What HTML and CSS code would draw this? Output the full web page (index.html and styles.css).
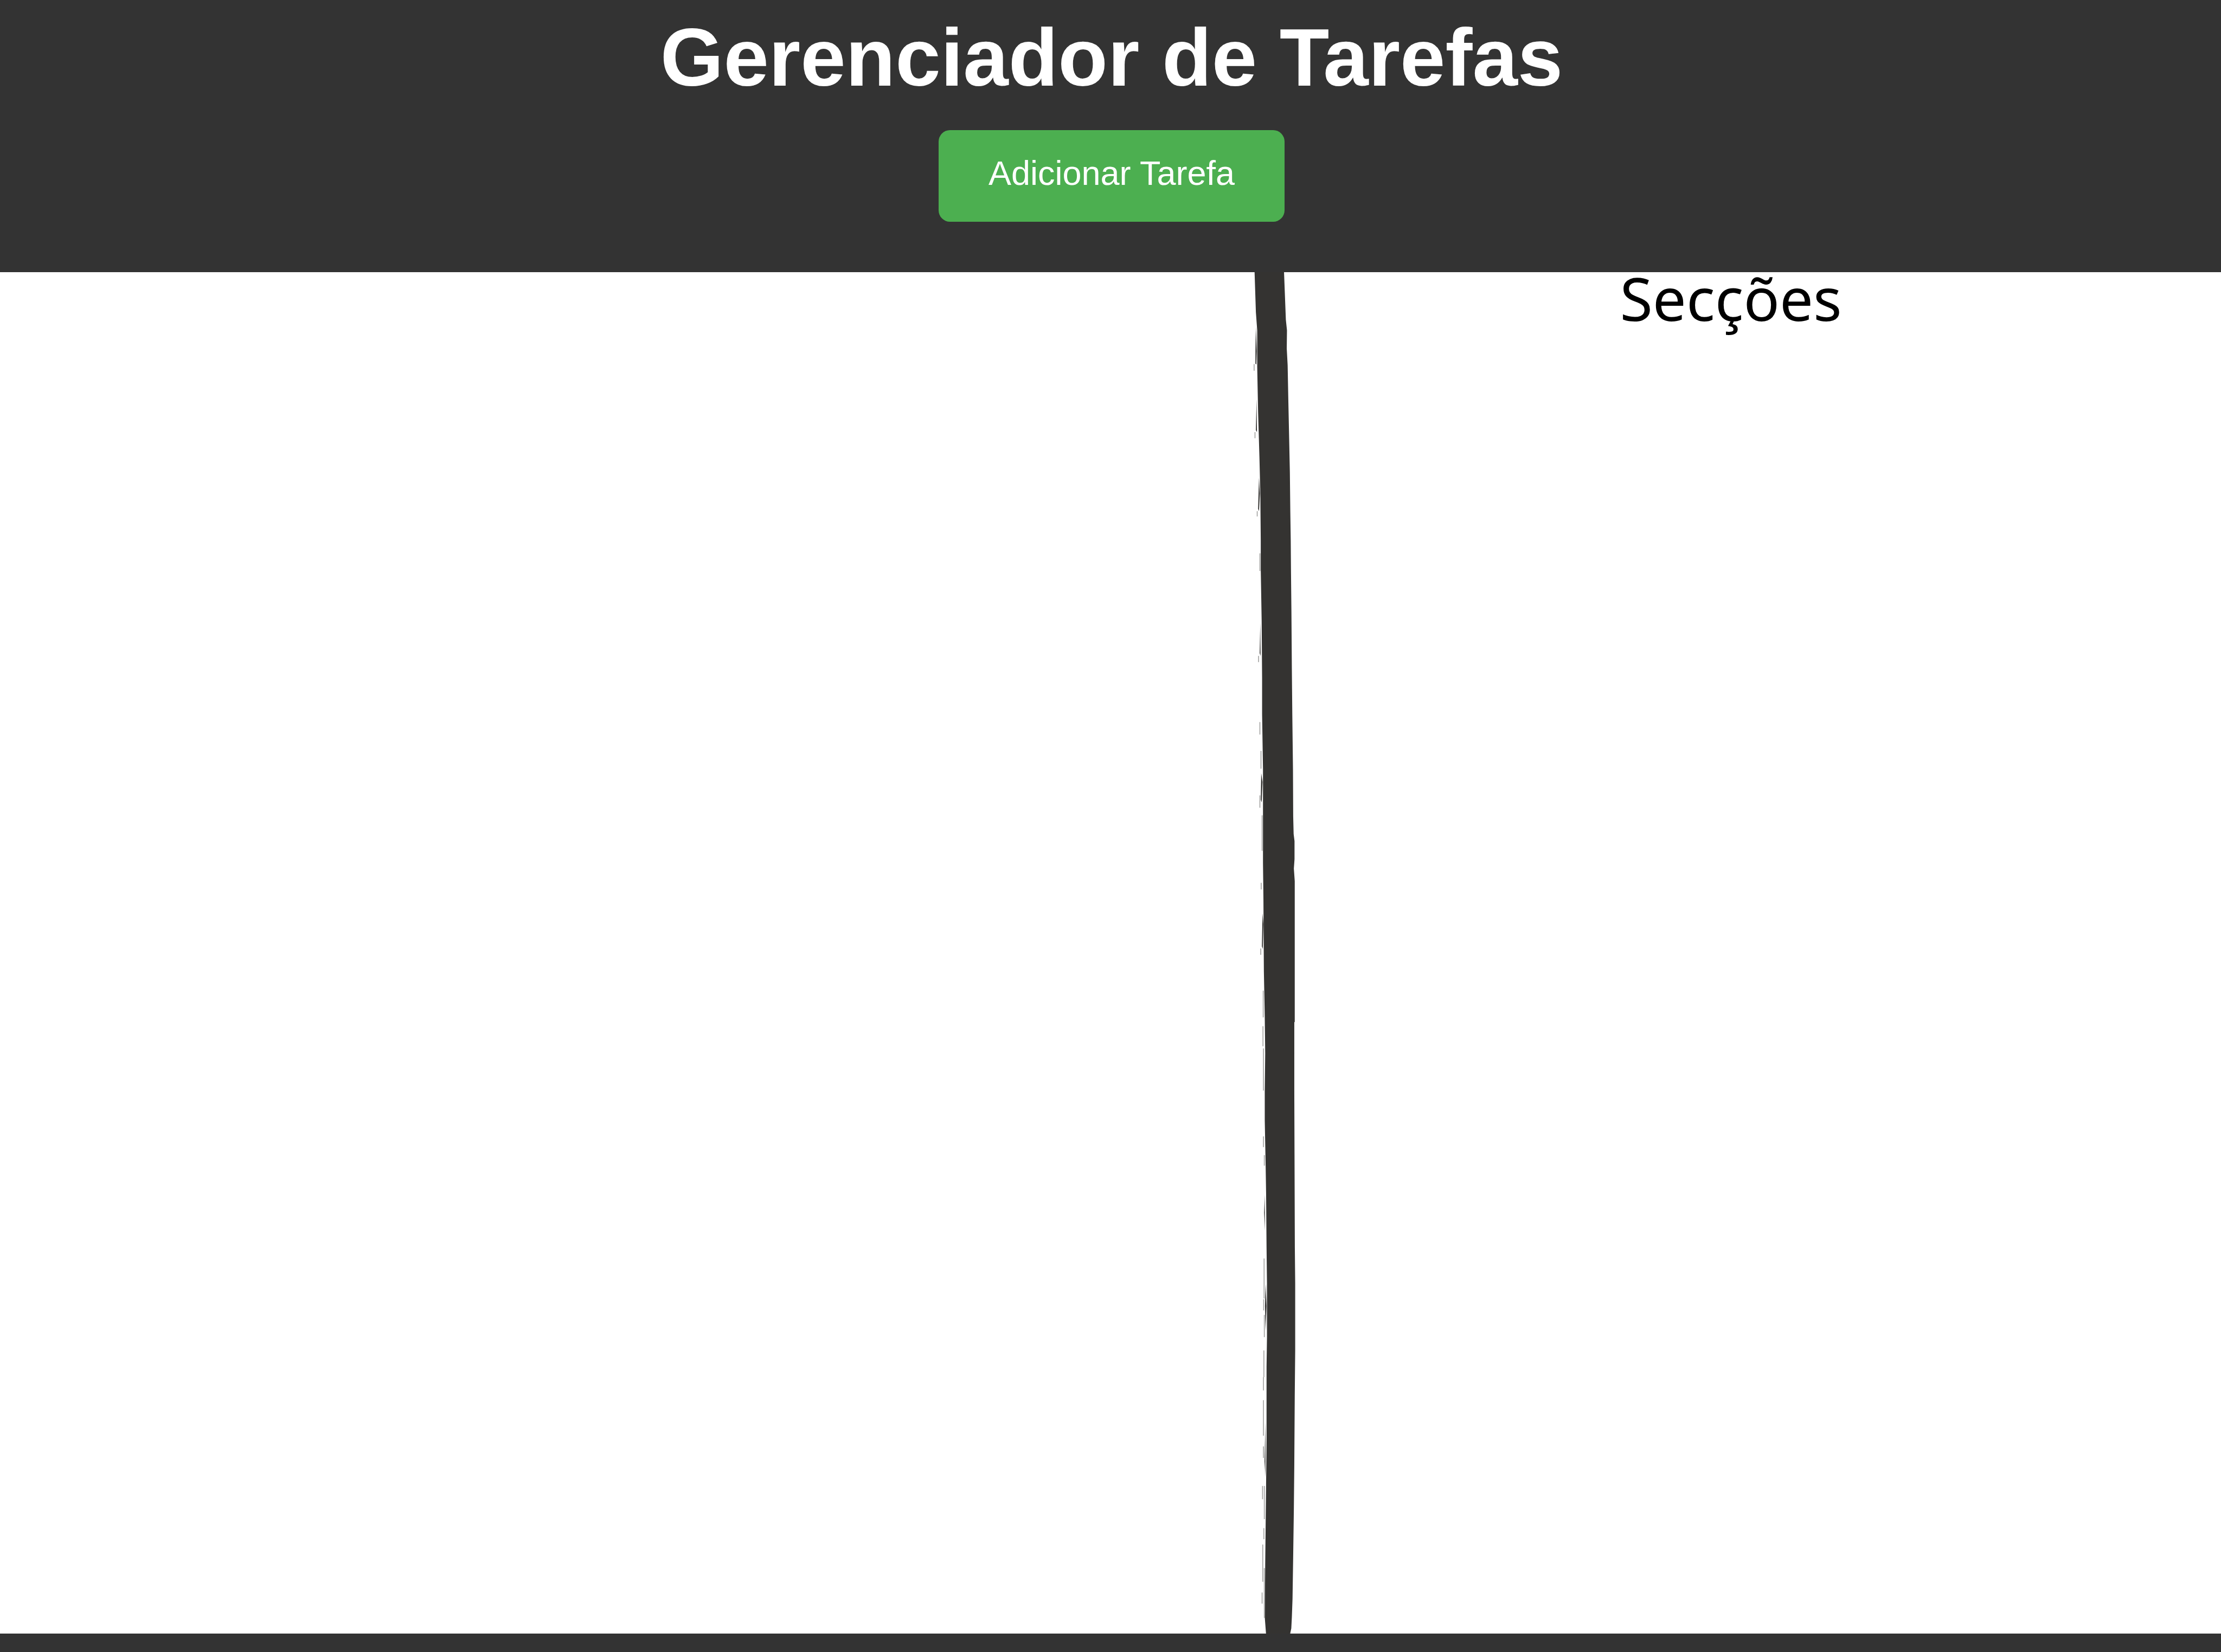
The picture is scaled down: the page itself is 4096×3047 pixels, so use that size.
FILE: index.html
```html
<!DOCTYPE html>
<html lang="pt">
<head>
  <meta charset="utf-8">
  <meta name="viewport" content="width=device-width, initial-scale=1">
  <title>Gerenciador de Tarefas</title>
  <link rel="stylesheet" href="styles.css">
</head>
<body>
  <header class="header">
    <h1 class="title">Gerenciador de Tarefas</h1>
    <button class="add-button" type="button">Adicionar Tarefa</button>
  </header>
  <main class="board">
    <section class="tasks" aria-label="Tarefas"></section>
    <svg class="divider" viewBox="2800 612 130 3066" preserveAspectRatio="none" aria-hidden="true">
      <path class="stroke" d="M2824 610 L2827 702 2830 743 2830 825 2832 927 2835 1029 2837 1110 2838 1217 2838 1282 2840 1396 2841 1526 2841 1608 2843 1730 2843 1942 2844 2024 2845 2187 2847 2289 2848 2371 2847 2457 2847 2522 2849 2624 2850 2685 2851 2807 2852 2889 2852 3011 2851 3077 2851 3237 2850 3342 2848 3523 2847 3641 2850 3680 H2904 L2904.5 3676 2906.7 3666 2908 3641 2909.5 3599 2911 3502 2912.5 3397 2913.5 3296 2914.5 3144 2915.5 3040 2915.5 2889 2914.7 2807 2914 2599 2913.5 2457 2913.5 2301 2914.5 2300 2914.5 1983 2912.5 1955 2914 1934 2914 1893 2912 1877 2911 1837 2910.5 1730 2909 1608 2908 1506 2907 1375 2906 1282 2905.5 1217 2904.5 1151 2903.5 1062 2901.5 968 2900 898 2898.5 821 2896.5 784 2897 743 2894.5 719 2890.3 610 Z"/>
      <!-- dry bristle marks along the left edge -->
      <path class="stroke" d="M2827 735 L2826 790 2826 818 2828 820 2829 790 Z M2828.500 897 L2827 968 2829.500 972 Z M2834 1075 L2832 1145 2834 1150 2836 1110 Z M2837 1400 L2835.500 1470 2837.500 1476 Z M2839 1740 L2838 1800 2840 1806 2842 1760 Z M2842 2055 L2840.500 2130 2842.500 2136 2844 2080 Z M2847 2690 L2845.500 2730 2847.500 2770 Z M2849 2890 L2847.500 2940 2849 2995 2851 2940 Z M2848.500 3200 L2846.500 3290 2848.500 3325 Z"/>
      <path class="scratch" d="M2823 819v15 M2825 972v14 M2830 1150v12 M2836 1245v40 M2833 1476v14 M2836 1625v28 M2838.500 1690v40 M2836 1790v28 M2841 1835v80 M2839 1987v15 M2838 2135v14 M2843.500 2230v60 M2843 2310v45 M2844 2360v95 M2844 2558v24 M2846 2600v24 M2845.500 2833v90 M2844.500 2925v25 M2846 2960v50 M2845 3040v60 M2844 3100v30 M2844 3152v80 M2844 3256v26 M2842 3345v30 M2846 3345v75 M2845 3440v25 M2842.500 3477v84 M2846 3530v112 M2841 3585v25"/>
    </svg>
    <section class="sections">
      <h2 class="sections-title">Secções</h2>
    </section>
  </main>
  <footer class="footer"></footer>
</body>
</html>
```
FILE: styles.css
```css
* {
  box-sizing: border-box;
}

body {
  display: flex;
  flex-direction: column;
  min-height: 100vh;
  margin: 0;
  background: #ffffff;
  color: #000000;
  font-family: "Liberation Sans", Arial, sans-serif;
}

.header {
  display: flex;
  flex-direction: column;
  align-items: center;
  gap: 50px;
  padding: 22px 24px 93px 28px;
  background: #333333;
}

.title {
  margin: 0;
  color: #ffffff;
  font-size: 150px;
  font-weight: 700;
  line-height: 168px;
}

.add-button {
  padding: 44px 92px 55px;
  border: 0;
  border-radius: 21px;
  background: #4caf50;
  color: #ffffff;
  font-family: inherit;
  font-size: 63px;
  line-height: 70px;
  cursor: pointer;
}

.board {
  display: grid;
  flex: 1;
  grid-template-columns: 56% 2.6% 1fr;
}

.divider {
  display: block;
  width: 100%;
  height: 100%;
}

.stroke {
  fill: #343331;
}

.scratch {
  fill: none;
  stroke: #a3a3a1;
  stroke-width: 2;
}

.sections {
  padding-right: 112px;
  text-align: center;
}

.sections-title {
  margin: 0;
  font-family: "Noto Sans", sans-serif;
  font-size: 110px;
  font-weight: 400;
  line-height: 94px;
}

.footer {
  height: 35px;
  background: #333333;
}
```
